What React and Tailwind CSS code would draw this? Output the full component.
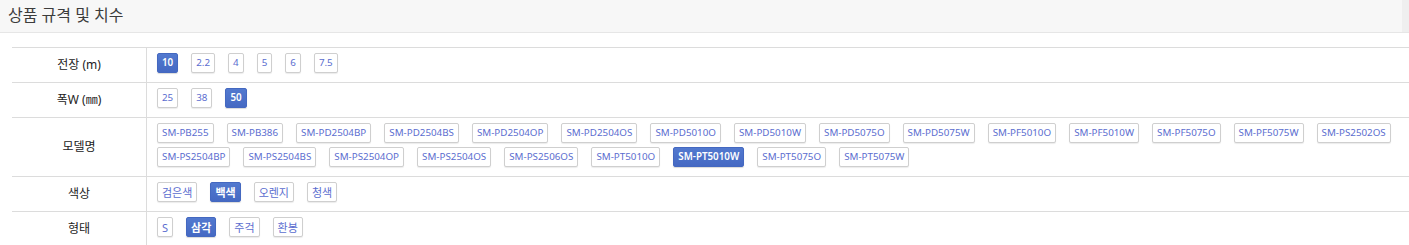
import { useState } from "react";

const rows = [
    { label: "전장 (m)", items: ["10", "2.2", "4", "5", "6", "7.5"], active: "10" },
    { label: "폭W (㎜)", items: ["25", "38", "50"], active: "50" },
    {
        label: "모델명",
        items: [
            "SM-PB255", "SM-PB386", "SM-PD2504BP", "SM-PD2504BS", "SM-PD2504OP", "SM-PD2504OS",
            "SM-PD5010O", "SM-PD5010W", "SM-PD5075O", "SM-PD5075W", "SM-PF5010O", "SM-PF5010W",
            "SM-PF5075O", "SM-PF5075W", "SM-PS2502OS", "SM-PS2504BP", "SM-PS2504BS", "SM-PS2504OP",
            "SM-PS2504OS", "SM-PS2506OS", "SM-PT5010O", "SM-PT5010W", "SM-PT5075O", "SM-PT5075W",
        ],
        active: "SM-PT5010W",
    },
    { label: "색상", items: ["검은색", "백색", "오렌지", "청색"], active: "백색", korean: true },
    { label: "형태", items: ["S", "삼각", "주걱", "환봉"], active: "삼각", korean: true },
];

function Option({ text, active, korean, onClick }) {
    const size = korean ? "text-[11px]" : "text-[9.8px]";
    return (
        <button
            onClick={onClick}
            className={
                active
                    ? `h-[20px] px-1 rounded-[2px] border border-[#4468c0] bg-gradient-to-b from-[#5279cf] to-[#4569c3] text-white font-semibold leading-none shadow-[0_1px_1px_rgba(0,0,0,0.15)] ${size}`
                    : `h-[20px] px-1 rounded-[2px] border border-[#cfcfcf] bg-white text-[#5b6dcf] leading-none shadow-[0_1px_1px_rgba(0,0,0,0.08)] ${size}`
            }
        >
            {text}
        </button>
    );
}

export default function App() {
    const [selected, setSelected] = useState(rows.map((r) => r.active));

    return (
        <div className="w-[1409px] h-[245px] overflow-hidden bg-white font-['Noto_Sans','Noto_Sans_CJK_KR',sans-serif]">
            <div className="flex h-[33px] bg-[#f7f7f7] border-b border-[#e6e6e6]">
                <h2 className="flex-1 pl-2 pt-[4px] text-[16px] text-[#3c3c3c] leading-[22px]">
                    상품 규격 및 치수
                </h2>
                <div className="w-[7px] bg-[#efefef]" />
            </div>
            <div className="ml-3 mt-[14px] border-t border-[#dcdcdc]">
                {rows.map((row, i) => (
                    <div key={row.label} className="grid grid-cols-[135px_1fr] border-b border-[#dcdcdc]">
                        <div className="flex items-center justify-center border-r border-[#dcdcdc] text-[12px] text-[#222]">
                            {row.label}
                        </div>
                        <div className="flex flex-wrap gap-x-[13px] gap-y-[4px] pl-[10px] pt-[5px] pb-[9px]">
                            {row.items.map((item) => (
                                <Option
                                    key={item}
                                    text={item}
                                    korean={row.korean}
                                    active={selected[i] === item}
                                    onClick={() => {
                                        const next = [...selected];
                                        next[i] = item;
                                        setSelected(next);
                                    }}
                                />
                            ))}
                        </div>
                    </div>
                ))}
            </div>
        </div>
    );
}
